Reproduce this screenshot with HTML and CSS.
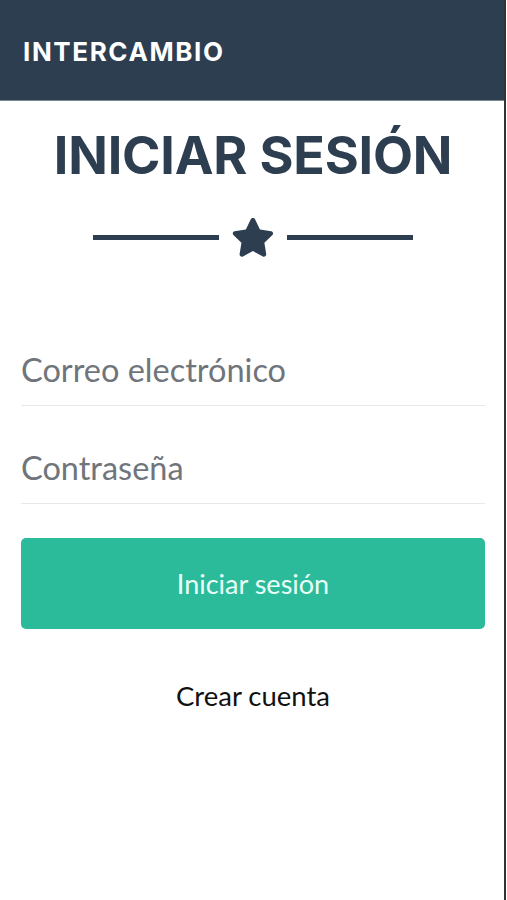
FILE: index.html
```html
<!DOCTYPE html>
<html lang="es">

<head>
    <meta charset="UTF-8">
    <meta name="viewport" content="width=device-width, initial-scale=1.0">
    <title>Intercambio - Iniciar sesión</title>

    <link rel="stylesheet" href="styles.css">

</head>

<body>

    <div class="page">

        <nav class="navbar">
            <a class="brand" href="#">INTERCAMBIO</a>
        </nav>

        <section class="login">
            <h1 class="title">INICIAR SESIÓN</h1>

            <div class="divider">
                <span class="divider-line"></span>
                <svg class="divider-star" viewBox="0 0 24 24" width="46" height="44">
                    <path d="M12 1.6c.5 0 .9.3 1.1.7l2.7 5.6 6.1.9c1 .1 1.4 1.4.7 2.1l-4.4 4.3 1 6.1c.2 1-.9 1.7-1.8 1.3L12 19.7l-5.5 2.9c-.9.4-2-.3-1.8-1.3l1-6.1-4.4-4.3c-.7-.7-.3-2 .7-2.1l6.1-.9 2.7-5.6c.3-.4.7-.7 1.2-.7z" fill="#2c3e50"/>
                </svg>
                <span class="divider-line"></span>
            </div>

            <form class="login-form">
                <div class="field field-email">
                    <input type="email" placeholder="Correo electrónico">
                </div>
                <div class="field field-pass">
                    <input type="password" placeholder="Contraseña">
                </div>

                <button type="submit" class="btn-primary">Iniciar sesión</button>
            </form>

            <a class="link-create" href="#">Crear cuenta</a>
        </section>

    </div>

</body>
</html>
```

FILE: styles.css
```css
:root{
    --color-dark: #2c3e50;
    --color-green: #2bbb9a;
    --color-muted: #6f757b;
}

* {
    padding: 0;
    margin: 0;
    box-sizing: border-box;
}

html,
body{
    height: 100%;
    background-color: #fff;
    font-family: "Lato", "Liberation Sans", sans-serif;
}

.page{
    min-height: 100%;
    margin-right: 1px;
    border-right: 2px solid #333;
}

.navbar{
    height: 101px;
    background-color: var(--color-dark);
    border-bottom: 1px solid #7d8690;
    display: flex;
    align-items: center;
    padding: 0 23px;
}

.brand{
    color: #fff;
    text-decoration: none;
    font-family: "Inter", "Liberation Sans", sans-serif;
    font-weight: 700;
    font-size: 26px;
    letter-spacing: 1.6px;
    padding-top: 3px;
}

.login{
    padding: 0 19px 0 21px;
    display: flex;
    flex-direction: column;
    align-items: center;
}

.title{
    margin-top: 23px;
    color: var(--color-dark);
    font-family: "Inter", "Liberation Sans", sans-serif;
    font-weight: 700;
    font-size: 52px;
    line-height: 64px;
    letter-spacing: -0.2px;
}

.divider{
    margin-top: 27px;
    display: flex;
    align-items: center;
    gap: 11px;
}

.divider-line{
    width: 126px;
    height: 5px;
    background-color: var(--color-dark);
}

.divider-star{
    display: block;
}

.login-form{
    width: 100%;
    margin-top: 72px;
    display: flex;
    flex-direction: column;
}

.field{
    border-bottom: 1px solid #e6e8ea;
}

.field input{
    width: 100%;
    border: none;
    outline: none;
    background: transparent;
    font-family: "Lato", sans-serif;
    font-size: 32.5px;
    color: #495057;
}

.field-email input{
    height: 74px;
    padding-top: 3px;
}

.field-pass input{
    height: 97px;
    padding-top: 26px;
}

.field input::placeholder{
    color: var(--color-muted);
}

.btn-primary{
    margin-top: 34px;
    height: 91px;
    border: none;
    border-radius: 5px;
    background-color: var(--color-green);
    color: #eafff8;
    font-family: "Lato", sans-serif;
    font-size: 27px;
    cursor: pointer;
}

.link-create{
    margin-top: 50px;
    color: #111;
    text-decoration: none;
    font-size: 27.5px;
}
```
